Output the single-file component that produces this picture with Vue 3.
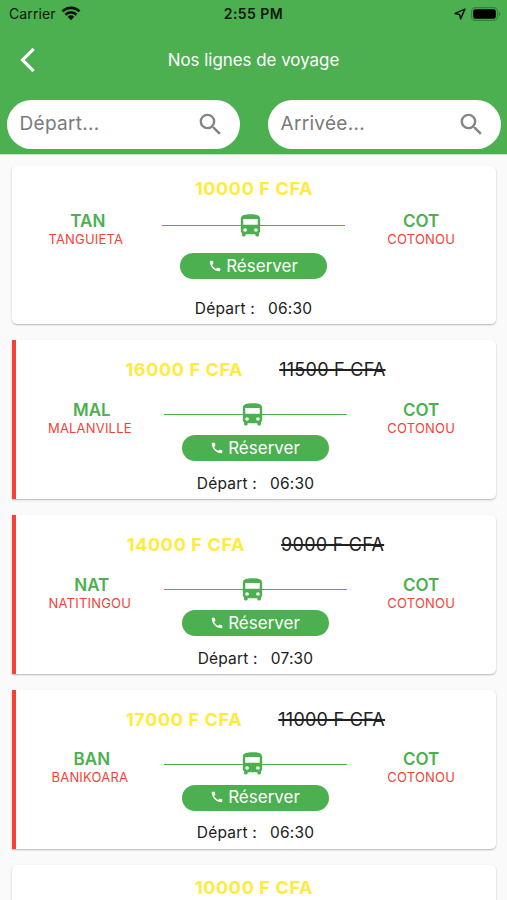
<template>
  <div class="screen">
    <header class="header">
      <div class="status-bar">
        <div class="status-left">
          <span>Carrier</span>
          <svg width="20" height="15" viewBox="0 0 20 15">
            <g fill="none" stroke="#07180a" stroke-width="2.7">
              <path d="M1.5 5.4a12 12 0 0 1 17 0" />
              <path d="M4.5 8.7a7.8 7.8 0 0 1 11 0" />
            </g>
            <path d="M6.7 10.7a4.7 4.7 0 0 1 6.6 0L10 14.2z" fill="#07180a" />
          </svg>
        </div>
        <span class="status-time">2:55 PM</span>
        <div class="status-right">
          <svg width="12" height="12" viewBox="0 0 12 12">
            <path d="M10.9 1.1 1 5.4l4.6 1 1 4.5z" fill="none" stroke="#07180a" stroke-width="1.5" stroke-linejoin="round" />
          </svg>
          <svg width="30" height="14" viewBox="0 0 30 14">
            <rect x=".6" y=".6" width="25.8" height="12.8" rx="3.8" fill="none" stroke="#35803a" stroke-width="1.1" />
            <rect x="2.2" y="2.2" width="22.6" height="9.6" rx="2" fill="#000" />
            <path d="M27.8 4.8c2 .6 2 3.8 0 4.4z" fill="#35803a" />
          </svg>
        </div>
      </div>
      <div class="nav-bar">
        <svg class="back" width="16" height="26" viewBox="0 0 16 26">
          <path d="M13.6 1.8 2.6 13l11 11.2" fill="none" stroke="#fff" stroke-width="3.2" />
        </svg>
        <h1 class="title">Nos lignes de voyage</h1>
      </div>
      <div class="search-row">
        <div v-for="label in searches" :key="label" class="search">
          <span>{{ label }}</span>
          <svg width="29" height="29" viewBox="0 0 24 24">
            <path fill="#858585" d="M15.5 14h-.79l-.28-.27A6.47 6.47 0 0 0 16 9.5 6.5 6.5 0 1 0 9.5 16c1.61 0 3.09-.59 4.23-1.57l.27.28v.79l5 4.99L20.49 19l-4.99-5zm-6 0C7.01 14 5 11.99 5 9.5S7.01 5 9.5 5 14 7.01 14 9.5 11.99 14 9.5 14z" />
          </svg>
        </div>
      </div>
    </header>

    <main class="list">
      <article v-for="line in lines" :key="line.id" class="card" :class="{ promo: line.oldPrice }">
        <div class="prices">
          <span class="price">{{ line.price }} F CFA</span>
          <span v-if="line.oldPrice" class="old-price">{{ line.oldPrice }} F CFA</span>
        </div>
        <div class="route">
          <div class="stop from">
            <span class="code">{{ line.code }}</span>
            <span class="city">{{ line.city }}</span>
          </div>
          <div class="middle">
            <div class="track">
              <span class="rule"></span>
              <svg class="bus" width="29" height="28" viewBox="0 0 24 24" preserveAspectRatio="none">
                <path fill="#4caf50" d="M4 16c0 .88.39 1.67 1 2.22V20c0 .55.45 1 1 1h1c.55 0 1-.45 1-1v-1h8v1c0 .55.45 1 1 1h1c.55 0 1-.45 1-1v-1.78c.61-.55 1-1.34 1-2.22V6c0-3.5-3.58-4-8-4s-8 .5-8 4v10zm3.5 1c-.83 0-1.5-.67-1.5-1.5S6.67 14 7.5 14s1.5.67 1.5 1.5S8.33 17 7.5 17zm9 0c-.83 0-1.5-.67-1.5-1.5s.67-1.5 1.5-1.5 1.5.67 1.5 1.5-.67 1.5-1.5 1.5zm1.5-6H6V6h12v5z" />
              </svg>
              <span class="rule"></span>
            </div>
            <button class="book">
              <svg width="14" height="14" viewBox="0 0 24 24">
                <path fill="#fff" d="M20.01 15.38c-1.23 0-2.42-.2-3.53-.56a.98.98 0 0 0-1.01.24l-1.57 1.97c-2.83-1.35-5.48-3.9-6.89-6.83l1.95-1.66c.27-.28.35-.67.24-1.02-.37-1.11-.56-2.3-.56-3.53 0-.54-.45-.99-.99-.99H4.19C3.65 3 3 3.24 3 3.99 3 13.28 10.73 21 20.01 21c.71 0 .99-.63.99-1.18v-3.45c0-.54-.45-.99-.99-.99z" />
              </svg>
              <span>Réserver</span>
            </button>
          </div>
          <div class="stop">
            <span class="code">COT</span>
            <span class="city">COTONOU</span>
          </div>
        </div>
        <div class="departure">
          <span>Départ :</span>
          <span>{{ line.time }}</span>
        </div>
      </article>
    </main>
  </div>
</template>

<script setup>
const searches = ['Départ...', 'Arrivée...']

const lines = [
  { id: 1, price: 10000, code: 'TAN', city: 'TANGUIETA', time: '06:30' },
  { id: 2, price: 16000, oldPrice: 11500, code: 'MAL', city: 'MALANVILLE', time: '06:30' },
  { id: 3, price: 14000, oldPrice: 9000, code: 'NAT', city: 'NATITINGOU', time: '07:30' },
  { id: 4, price: 17000, oldPrice: 11000, code: 'BAN', city: 'BANIKOARA', time: '06:30' },
  { id: 5, price: 10000, code: 'TAN', city: 'TANGUIETA', time: '06:30' }
]
</script>

<style>
body {
  margin: 0;
  overflow: hidden;
}
</style>

<style scoped>
.screen {
  width: 507px;
  height: 900px;
  overflow: hidden;
  background: #fafafa;
  font-family: Inter, Roboto, sans-serif;
  color: #202020;
}

.screen * {
  box-sizing: border-box;
}

.screen svg {
  display: block;
  flex: none;
}

.header {
  height: 155px;
  background: #4caf50;
  border-bottom: 1px solid #c3e6c5;
}

.status-bar {
  display: grid;
  grid-template-columns: 1fr auto 1fr;
  align-items: center;
  height: 27px;
  padding: 0 6px;
  font-size: 14px;
  color: #07180a;
}

.status-left,
.status-right {
  display: flex;
  align-items: center;
  gap: 6px;
}

.status-left {
  gap: 5px;
  padding-left: 3px;
  letter-spacing: 0.1px;
}

.status-right {
  justify-content: flex-end;
  gap: 5px;
}

.status-time {
  font-weight: 600;
  letter-spacing: 0.45px;
}

.nav-bar {
  display: grid;
  grid-template-columns: 48px 1fr 48px;
  align-items: center;
  height: 65px;
}

.back {
  margin-left: 20px;
}

.title {
  margin: 0;
  font-size: 16.9px;
  font-weight: 400;
  text-align: center;
  color: #fff;
}

.search-row {
  display: flex;
  justify-content: space-between;
  padding: 8px 6px 0 7px;
}

.search {
  display: flex;
  align-items: center;
  justify-content: space-between;
  width: 233px;
  height: 49px;
  padding: 0 15.5px 0 12.5px;
  border-radius: 25px;
  background: #fff;
  font-size: 19px;
  letter-spacing: 0.3px;
  color: #7a7a7a;
}

.search span {
  margin-top: -3px;
}

.list {
  display: flex;
  flex-direction: column;
  gap: 16px;
  padding: 10.6px 11px 0 12px;
}

.card {
  flex: none;
  height: 158.8px;
  padding-top: 12px;
  border-radius: 5px;
  background: #fff;
  box-shadow: 0 1px 2px rgba(0, 0, 0, 0.28);
}

.card.promo {
  padding-top: 19px;
  border-left: 4px solid #f44336;
  border-radius: 0 5px 5px 0;
}

.prices {
  display: flex;
  justify-content: center;
  gap: 36px;
  height: 22px;
  font-size: 18px;
  line-height: 22px;
}

.price {
  font-weight: 700;
  letter-spacing: 0.65px;
  color: #ffeb3b;
}

.promo .price {
  margin-left: -1px;
}

.old-price {
  letter-spacing: 0.25px;
  text-decoration: line-through;
  text-decoration-thickness: 1.5px;
}

.route {
  display: flex;
  margin-top: 10px;
}

.promo .route {
  margin-top: 17.4px;
}

.stop {
  display: flex;
  flex-direction: column;
  align-items: center;
  width: 150px;
}

.from {
  width: 148px;
}

.from .code {
  padding-left: 4px;
}

.middle + .stop {
  margin-left: 1px;
}

.promo .middle + .stop {
  margin-left: -1px;
}

.code {
  font-size: 17px;
  font-weight: 600;
  line-height: 22px;
  color: #4caf50;
}

.city {
  font-size: 13px;
  line-height: 15px;
  letter-spacing: 0.2px;
  color: #f44336;
}

.middle {
  display: flex;
  flex-direction: column;
  align-items: center;
  width: 184px;
  margin-left: 2px;
}

.promo .middle {
  margin-left: 0;
}

.track {
  display: flex;
  align-items: center;
  width: 100%;
  height: 32px;
}

.rule {
  flex: 0 0 83px;
  height: 1px;
  margin-right: -9px;
  background: #4caf50;
}

.bus {
  margin-top: 0;
}

.bus + .rule {
  flex: 1;
  margin: 0 0 0 -5px;
}

.book {
  display: flex;
  align-items: center;
  justify-content: center;
  gap: 4px;
  width: 147px;
  height: 26px;
  margin: 11.6px 1px 0 0;
  padding: 0 0 1px;
  border: 0;
  border-radius: 13px;
  background: #4caf50;
  font-family: inherit;
  font-size: 17px;
  color: #fff;
}

.promo .book {
  margin-top: 4.6px;
}

.departure {
  display: flex;
  justify-content: center;
  gap: 13px;
  margin: 18.4px 1px 0 0;
  font-size: 15.5px;
  line-height: 22px;
  letter-spacing: 0.2px;
}

.promo .departure {
  margin-top: 11.4px;
}
</style>
